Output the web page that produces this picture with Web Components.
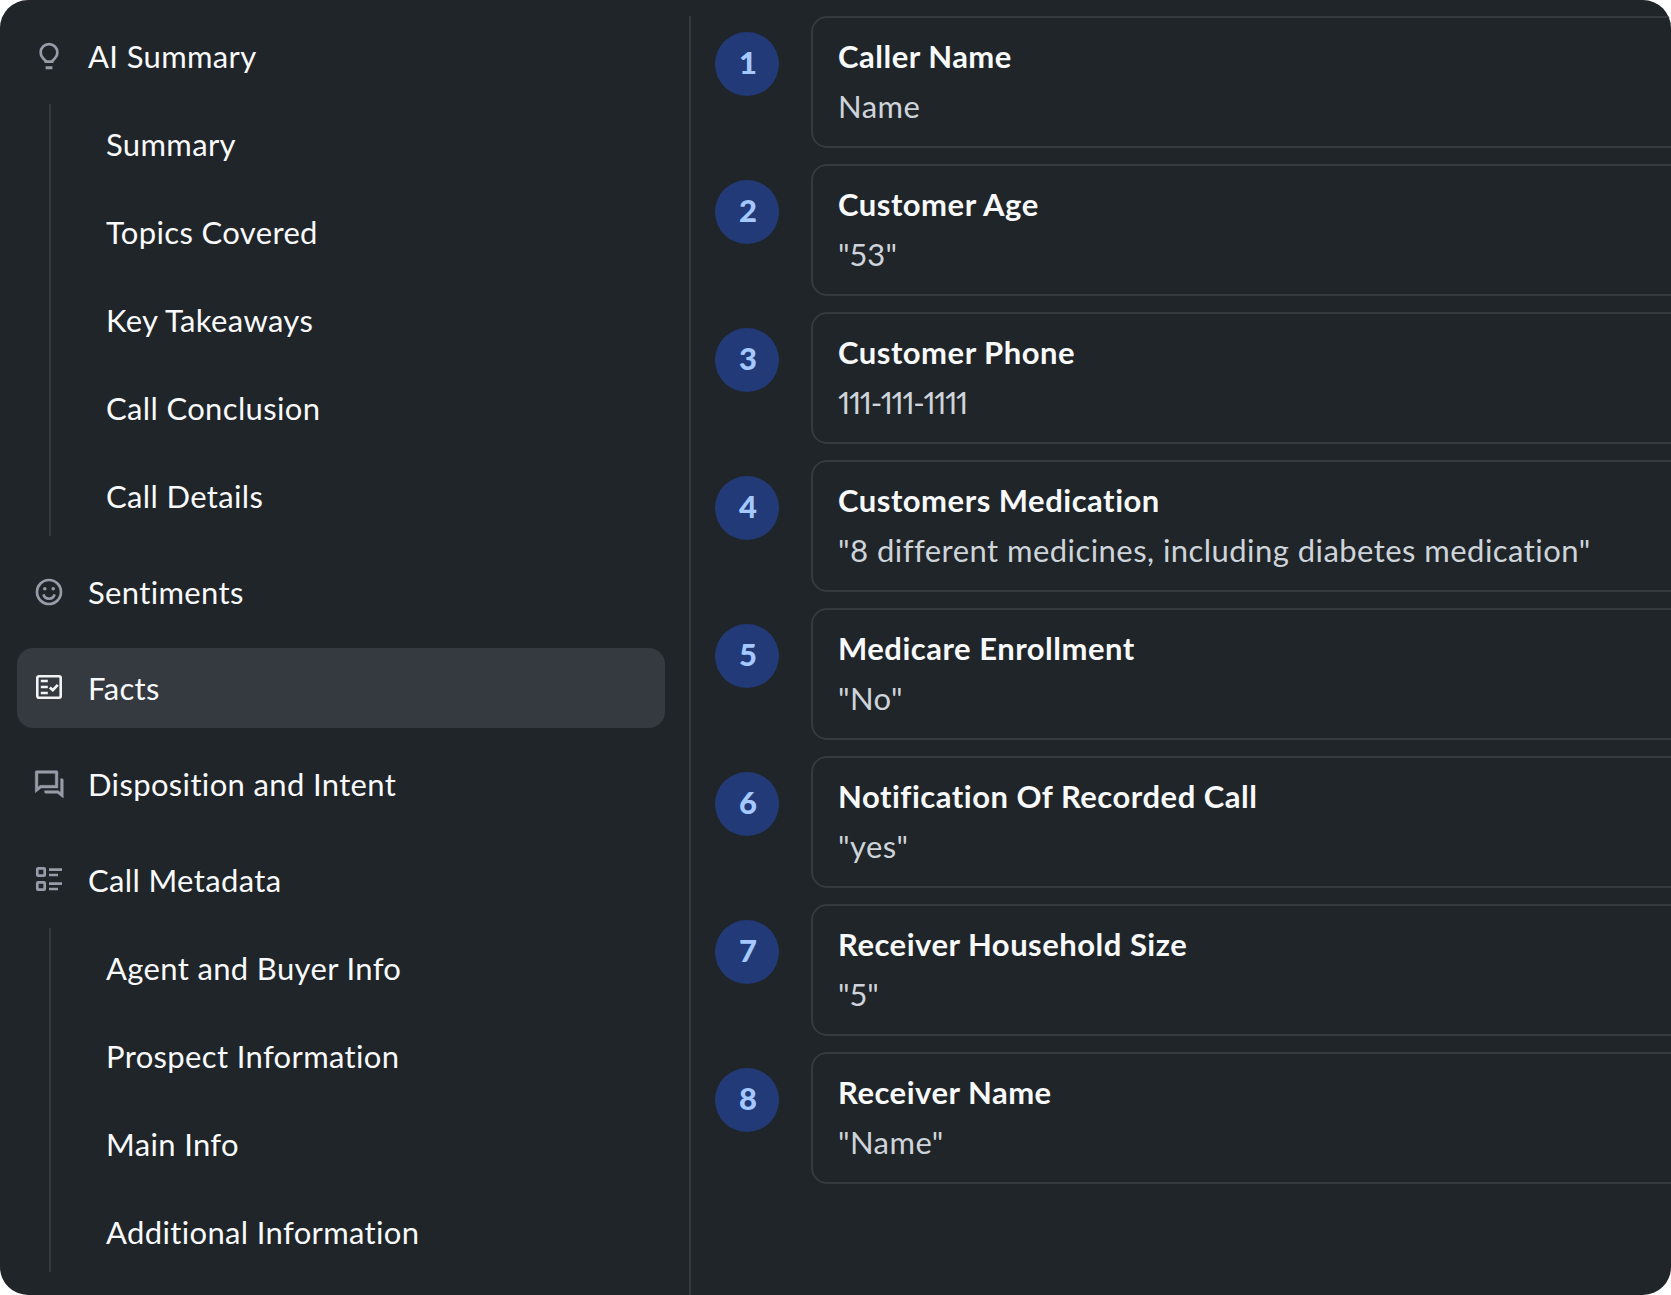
<!doctype html>
<html>
<head>
<meta charset="utf-8">
<title>Facts</title>
<style>
    html, body { margin: 0; background: #fff; }
    body { font-family: Lato, "Liberation Sans", sans-serif; }
</style>
</head>
<body>
<call-panel>
    <side-nav slot="nav">
        <nav-item icon="bulb">AI Summary</nav-item>
        <nav-group>
            <nav-link>Summary</nav-link>
            <nav-link>Topics Covered</nav-link>
            <nav-link>Key Takeaways</nav-link>
            <nav-link>Call Conclusion</nav-link>
            <nav-link>Call Details</nav-link>
        </nav-group>
        <nav-item icon="smile">Sentiments</nav-item>
        <nav-item icon="facts" active>Facts</nav-item>
        <nav-item icon="chat">Disposition and Intent</nav-item>
        <nav-item icon="list">Call Metadata</nav-item>
        <nav-group>
            <nav-link>Agent and Buyer Info</nav-link>
            <nav-link>Prospect Information</nav-link>
            <nav-link>Main Info</nav-link>
            <nav-link>Additional Information</nav-link>
        </nav-group>
    </side-nav>
    <fact-list slot="main">
        <fact-row num="1" label="Caller Name">Name</fact-row>
        <fact-row num="2" label="Customer Age">"53"</fact-row>
        <fact-row num="3" label="Customer Phone" tight>111-111-1111</fact-row>
        <fact-row num="4" label="Customers Medication">"8 different medicines, including diabetes medication"</fact-row>
        <fact-row num="5" label="Medicare Enrollment">"No"</fact-row>
        <fact-row num="6" label="Notification Of Recorded Call">"yes"</fact-row>
        <fact-row num="7" label="Receiver Household Size">"5"</fact-row>
        <fact-row num="8" label="Receiver Name">"Name"</fact-row>
    </fact-list>
</call-panel>

<script>
(function () {
    const icons = {
        bulb: `<g fill="none" stroke="currentColor" stroke-width="2.7" stroke-linejoin="round">
                <path d="M12.6 21.7c0-1.4-.9-2.2-2.5-3.4a8.35 8.35 0 1 1 11.8 0c-1.6 1.2-2.5 2-2.5 3.4z"/>
                <path d="M12.6 27.7h6.8" stroke-width="3"/></g>`,
        smile: `<circle cx="16" cy="16" r="12" fill="none" stroke="currentColor" stroke-width="2.7"/>
                <circle cx="11.8" cy="12.8" r="1.8" fill="currentColor"/>
                <circle cx="20.2" cy="12.8" r="1.8" fill="currentColor"/>
                <path d="M10.4 18.4a5.8 5.8 0 0 0 11.2 0" fill="none" stroke="currentColor" stroke-width="2.6"/>`,
        facts: `<rect x="4.3" y="4.3" width="23.4" height="21.4" rx="1.6" fill="none" stroke="currentColor" stroke-width="2.6"/>
                <path d="M7.8 9h7M7.8 15h7M7.8 21h7" fill="none" stroke="currentColor" stroke-width="2.6"/>
                <path d="M16.8 15.4l3 2.8 5-5.4" fill="none" stroke="currentColor" stroke-width="2.7"/>`,
        chat: `<g transform="scale(1.3333) translate(.7 0)"><path fill="currentColor" stroke="currentColor" stroke-width=".35" d="M5.455 15L1 18.5V3a1 1 0 0 1 1-1h15a1 1 0 0 1 1 1v12H5.455zm-.692-2H16V4H3v10.385L4.763 13zM8 17h10.237L20 18.385V8h1a1 1 0 0 1 1 1v13.5L17.545 19H9a1 1 0 0 1-1-1v-1z"/></g>`,
        list: `<g fill="none" stroke="currentColor" stroke-width="2.7">
                <rect x="4.3" y="4.3" width="7.4" height="7.4" rx=".8"/>
                <rect x="4.3" y="18.3" width="7.4" height="7.4" rx=".8"/>
                <path d="M16 5.6h13M16 11h9M16 19.6h13M16 25h9"/></g>`
    };

    const panelTemplate = document.createElement("template");
    panelTemplate.innerHTML = `
        <style>
            :host { display: grid; grid-template-columns: 689px 1fr; width: 1671px; height: 1295px; background: #202529; border-radius: 28px; overflow: hidden; }
        </style>
        <slot name="nav"></slot>
        <slot name="main"></slot>
    `;

    class CallPanel extends HTMLElement {
        constructor() {
            super();
            this.attachShadow({ mode: "open" }).appendChild(panelTemplate.content.cloneNode(true));
        }
    }

    class SideNav extends HTMLElement {
        constructor() {
            super();
            this.attachShadow({ mode: "open" }).innerHTML = `
                <style>
                    :host { display: flex; flex-direction: column; padding: 16px 24px 0 17px; box-sizing: border-box; min-width: 0; }
                    ::slotted(nav-item) { margin-bottom: 16px; }
                    ::slotted(nav-group) { margin: -8px 0 16px 32px; }
                </style>
                <slot></slot>
            `;
        }
    }

    class NavItem extends HTMLElement {
        constructor() {
            super();
            const icon = icons[this.getAttribute("icon")] || "";
            this.attachShadow({ mode: "open" }).innerHTML = `
                <style>
                    :host { display: flex; align-items: center; gap: 23px; height: 80px; padding-left: 16px; border-radius: 16px; color: #f8f9fa; font-size: 31px; letter-spacing: .35px; }
                    :host([active]) { background: #343a40; }
                    svg { width: 32px; height: 32px; flex: none; color: #979ca8; }
                    :host([active]) svg { color: #f1f3f5; }
                </style>
                <svg viewBox="0 0 32 32">${icon}</svg>
                <span><slot></slot></span>
            `;
        }
    }

    class NavGroup extends HTMLElement {
        constructor() {
            super();
            this.attachShadow({ mode: "open" }).innerHTML = `
                <style>
                    :host { display: flex; flex-direction: column; gap: 8px; border-left: 2px solid #343a40; padding-left: 55px; }
                </style>
                <slot></slot>
            `;
        }
    }

    class NavLink extends HTMLElement {
        constructor() {
            super();
            this.attachShadow({ mode: "open" }).innerHTML = `
                <style>
                    :host { display: flex; align-items: center; height: 80px; color: #f8f9fa; font-size: 31px; letter-spacing: .35px; }
                </style>
                <slot></slot>
            `;
        }
    }

    class FactList extends HTMLElement {
        constructor() {
            super();
            this.attachShadow({ mode: "open" }).innerHTML = `
                <style>
                    :host { display: flex; flex-direction: column; gap: 16px; margin-top: 16px; border-left: 2px solid #343a40; padding-left: 24px; min-width: 0; }
                </style>
                <slot></slot>
            `;
        }
    }

    class FactRow extends HTMLElement {
        constructor() {
            super();
            this.attachShadow({ mode: "open" }).innerHTML = `
                <style>
                    :host { display: flex; align-items: flex-start; gap: 32px; }
                    .num { flex: none; width: 64px; height: 64px; margin-top: 16px; padding: 0 0 4px 2px; box-sizing: border-box; border-radius: 50%; background: #223a78; color: #a5c8ff; font-size: 31px; font-weight: 900; display: flex; align-items: center; justify-content: center; }
                    .card { flex: 1; margin-right: -40px; height: 132px; box-sizing: border-box; padding: 18px 25px; border: 2px solid #343a40; border-radius: 16px; }
                    .label { color: #f8f9fa; font-size: 31px; font-weight: 700; letter-spacing: .5px; line-height: 40px; }
                    .value { color: #ced4da; font-size: 31px; letter-spacing: .45px; line-height: 40px; margin-top: 10px; font-variant-numeric: proportional-nums; }
                    :host([tight]) .value { letter-spacing: -1.4px; }
                </style>
                <div class="num">${this.getAttribute("num")}</div>
                <div class="card">
                    <div class="label">${this.getAttribute("label")}</div>
                    <div class="value"><slot></slot></div>
                </div>
            `;
        }
    }

    customElements.define("call-panel", CallPanel);
    customElements.define("side-nav", SideNav);
    customElements.define("nav-item", NavItem);
    customElements.define("nav-group", NavGroup);
    customElements.define("nav-link", NavLink);
    customElements.define("fact-list", FactList);
    customElements.define("fact-row", FactRow);
})();
</script>
</body>
</html>
